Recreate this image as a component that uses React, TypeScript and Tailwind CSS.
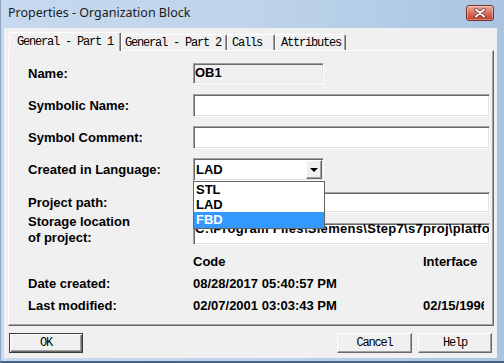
import React from 'react';

const sunken =
  'border border-t-[#a0a0a0] border-l-[#a0a0a0] border-b-white border-r-white shadow-[inset_1px_1px_0_#696969,inset_-1px_-1px_0_#e3e3e3]';

const raised =
  'border border-t-white border-l-white border-b-[#696969] border-r-[#696969] shadow-[inset_-1px_-1px_0_#a0a0a0]';

const mono = "font-['Liberation_Mono',monospace] font-normal text-[12px] tracking-[-1.2px]";

export default function App() {
  const label = 'w-[165px] shrink-0 whitespace-nowrap';

  return (
    <div className="w-[504px] h-[363px] flex flex-col overflow-hidden bg-gradient-to-r from-[#c6d9ee] via-[#bfd4eb] to-[#a9c4e2] border-l border-l-[#8ea6c2] border-b-2 border-b-[#4a6383] font-['Liberation_Sans',Arial,sans-serif] text-[13px] font-bold text-black">
      {/* Title bar */}
      <div className="relative h-[28px] shrink-0 flex items-center pl-[7px] pb-[2px]">
        <span className="font-['Noto_Sans',sans-serif] font-normal text-[12.5px] text-[#1b1b1b]">
          Properties - Organization Block
        </span>
        <div className="absolute right-[10px] top-[5px] w-[28px] h-[16px] rounded-[3px] border border-[#7a3128] bg-gradient-to-b from-[#e8aa9e] via-[#d3705f] to-[#c0392b] shadow-[inset_0_0_0_1px_rgba(255,255,255,0.35)] flex items-center justify-center">
          <svg width="12" height="10" viewBox="0 0 12 10">
            <path d="M2 1.5 L10 8.5 M10 1.5 L2 8.5" stroke="#6b2219" strokeWidth="3.4" strokeLinecap="round" />
            <path d="M2 1.5 L10 8.5 M10 1.5 L2 8.5" stroke="#ffffff" strokeWidth="2" strokeLinecap="round" />
          </svg>
        </div>
      </div>

      {/* Client area */}
      <div className="flex-1 ml-[3px] mr-[7px] mb-[3px] bg-[#f0f0f0] flex flex-col pl-[4px] pr-[3px] pt-[4px]">
        {/* Tabs */}
        <div className={`h-[18px] flex items-end ${mono}`}>
          <div className="relative z-10 ml-[1px] mb-[-1px] w-[112px] h-[19px] bg-[#f0f0f0] border-t border-l border-t-white border-l-white border-r border-r-[#696969] rounded-t-[2px] shadow-[inset_-1px_0_0_#a0a0a0] pl-[7px] flex items-center">
            General - Part 1
          </div>
          <div className="w-[106px] h-[16px] border-t border-l border-t-white border-l-white border-r border-r-[#696969] rounded-t-[2px] shadow-[inset_-1px_0_0_#a0a0a0] pl-[3px] flex items-center">
            General - Part 2
          </div>
          <div className="w-[48px] h-[16px] border-t border-l border-t-white border-l-white border-r border-r-[#696969] rounded-t-[2px] shadow-[inset_-1px_0_0_#a0a0a0] pl-[4px] flex items-center">
            Calls
          </div>
          <div className="w-[71px] h-[16px] border-t border-l border-t-white border-l-white border-r border-r-[#696969] rounded-t-[2px] shadow-[inset_-1px_0_0_#a0a0a0] pl-[5px] flex items-center">
            Attributes
          </div>
        </div>

        {/* Tab panel */}
        <div className="relative h-[276px] shrink-0 border border-t-white border-l-white border-b-[#696969] border-r-[#696969] shadow-[inset_-1px_-1px_0_#a0a0a0] overflow-hidden pl-[19px]">
          <div className="mt-[12px] h-[21px] flex items-center">
            <div className={label}>Name:</div>
            <div className={`${sunken} w-[131px] h-[21px] bg-[#f0f0f0] pl-[1px] leading-[18px]`}>OB1</div>
          </div>

          <div className="mt-[10px] h-[23px] flex items-center">
            <div className={label}>Symbolic Name:</div>
            <div className={`${sunken} w-[297px] h-[23px] bg-white`} />
          </div>

          <div className="mt-[9px] h-[23px] flex items-center">
            <div className={label}>Symbol Comment:</div>
            <div className={`${sunken} w-[297px] h-[23px] bg-white`} />
          </div>

          <div className="mt-[9px] h-[23px] flex items-center">
            <div className={label}>Created in Language:</div>
            <div className="relative z-20">
              <div className={`${sunken} w-[131px] h-[23px] bg-white p-[1px] flex items-center`}>
                <span className="flex-1 pl-[1px]">LAD</span>
                <div className={`${raised} w-[16px] h-[19px] bg-[#f0f0f0] flex items-center justify-center`}>
                  <div className="w-0 h-0 border-x-[4px] border-x-transparent border-t-[4px] border-t-black" />
                </div>
              </div>
              <div className="absolute left-0 top-[23px] w-[132px] border border-[#646464] bg-white">
                <div className="h-[15px] leading-[15px] pl-[2px]">STL</div>
                <div className="h-[15px] leading-[15px] pl-[2px]">LAD</div>
                <div className="h-[16px] leading-[16px] pl-[2px] bg-[#3399ff] text-white">FBD</div>
              </div>
            </div>
          </div>

          <div className="mt-[11px] h-[21px] flex items-center">
            <div className={label}>Project path:</div>
            <div className={`${sunken} w-[297px] h-[21px] bg-white`} />
          </div>

          <div className="mt-[1px] flex items-start">
            <div className={`${label} leading-[16px]`}>
              Storage location
              <br />
              of project:
            </div>
            <div className={`${sunken} mt-[9px] w-[297px] h-[22px] bg-white overflow-hidden pl-[1px]`}>
              <div className="mt-[-3px] leading-[16px] whitespace-nowrap tracking-[0.3px]">
                C:\Program Files\Siemens\Step7\s7proj\platform
              </div>
            </div>
          </div>

          <div className="mt-[8px] flex leading-[16px]">
            <div className={label} />
            <div className="w-[230px] shrink-0">Code</div>
            <div className="w-[61px] overflow-hidden whitespace-nowrap">Interface</div>
          </div>

          <div className="mt-[6px] flex leading-[16px]">
            <div className={label}>Date created:</div>
            <div className="w-[230px] shrink-0 whitespace-nowrap">08/28/2017 05:40:57 PM</div>
            <div className="w-[61px] overflow-hidden whitespace-nowrap" />
          </div>

          <div className="mt-[6px] flex leading-[16px]">
            <div className={label}>Last modified:</div>
            <div className="w-[230px] shrink-0 whitespace-nowrap">02/07/2001 03:03:43 PM</div>
            <div className="w-[61px] overflow-hidden whitespace-nowrap">02/15/1996 04:51:12 PM</div>
          </div>
        </div>

        {/* Buttons */}
        <div className={`mt-[7px] h-[20px] flex ${mono}`}>
          <div className="ml-[1px] w-[74px] h-[20px] bg-[#f0f0f0] border border-[#3c3c3c] shadow-[inset_1px_1px_0_#fff,inset_-1px_-1px_0_#696969,inset_-2px_-2px_0_#a0a0a0] flex items-center justify-center">
            OK
          </div>
          <div className={`ml-auto w-[75px] h-[20px] bg-[#f0f0f0] ${raised} flex items-center justify-center`}>
            Cancel
          </div>
          <div className={`ml-[6px] mr-[2px] w-[74px] h-[20px] bg-[#f0f0f0] ${raised} flex items-center justify-center`}>
            Help
          </div>
        </div>
      </div>
    </div>
  );
}
